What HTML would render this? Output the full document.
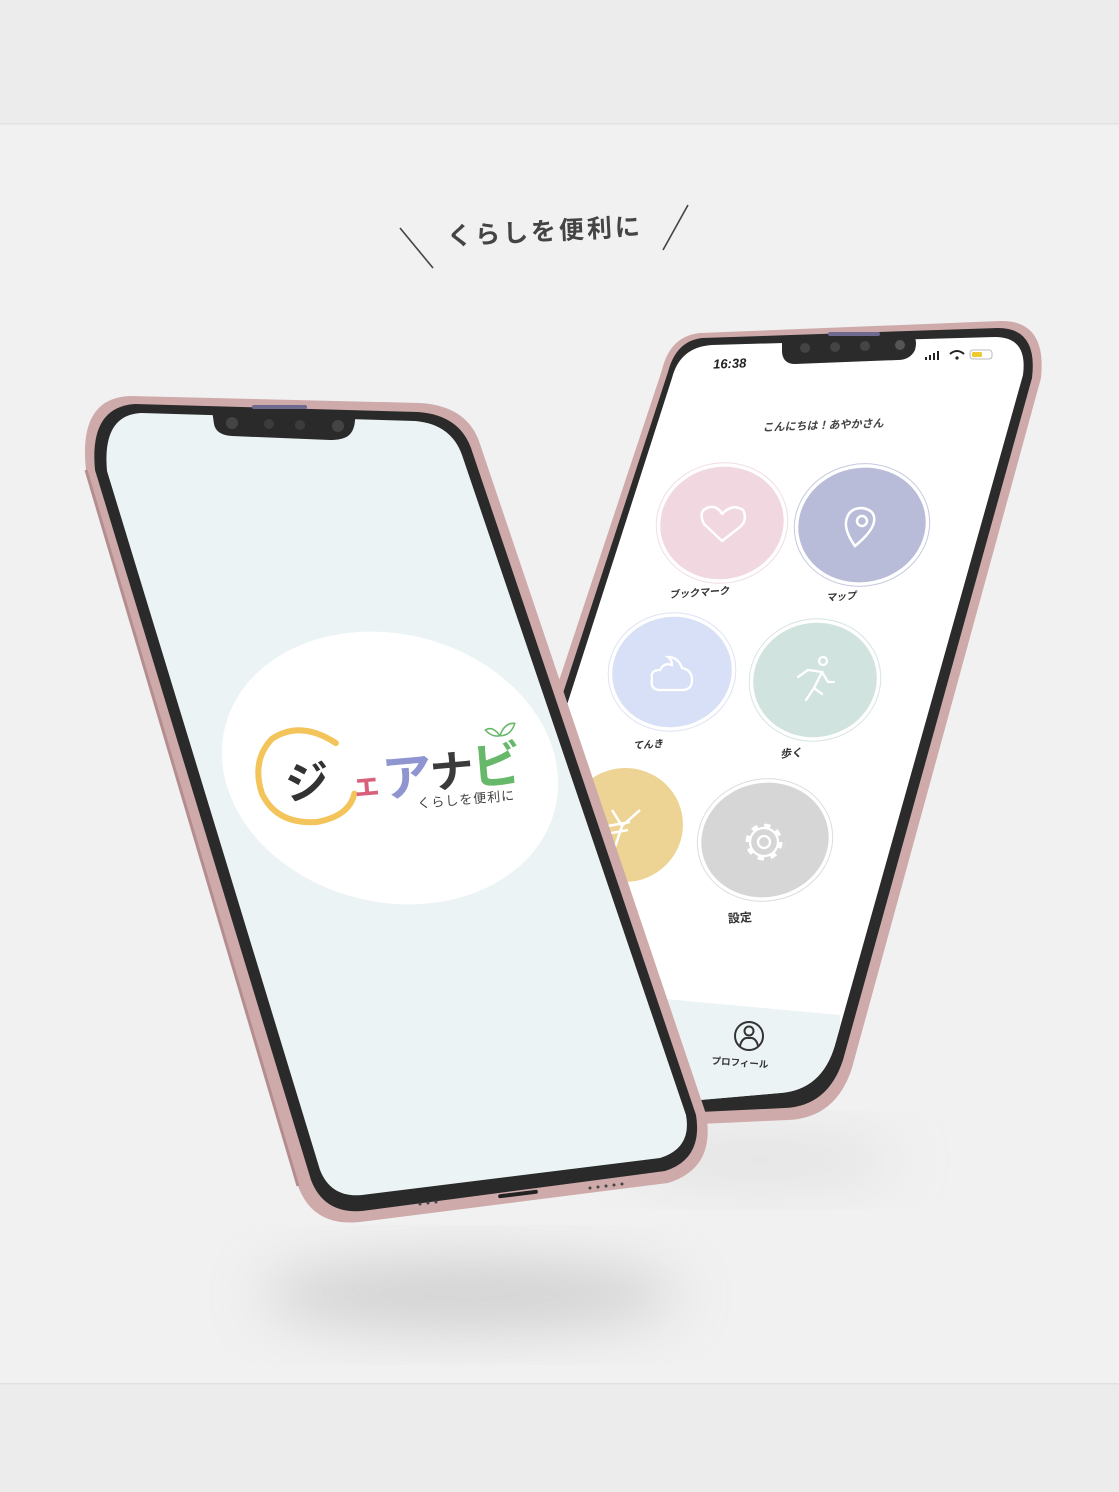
<!DOCTYPE html>
<html><head><meta charset="utf-8"><style>
html,body{margin:0;padding:0;background:#f1f1f1;}
svg{display:block}
text{font-family:"Liberation Sans","Noto Sans CJK JP",sans-serif;}
</style></head><body>
<svg width="1119" height="1492" viewBox="0 0 1119 1492" xmlns="http://www.w3.org/2000/svg">
<defs>
<filter id="bl" x="-50%" y="-50%" width="200%" height="200%"><feGaussianBlur stdDeviation="28"/></filter>
<clipPath id="rs"><path d="M712,345 L995,337 Q1028,337 1023,375 L835,1045 Q822,1090 780,1093 L700,1100 L440,1100 L672,378 Q680,347 712,345 Z"/></clipPath>
</defs>
<rect width="1119" height="1492" fill="#f1f1f1"/>
<rect width="1119" height="123" fill="#ececec"/>
<rect y="123" width="1119" height="1.5" fill="#e2e2e2"/>
<rect y="1383" width="1119" height="109" fill="#ececec"/>
<rect y="1383" width="1119" height="1.5" fill="#e0e0e0"/>

<line x1="400" y1="228" x2="433" y2="268" stroke="#444" stroke-width="1.6"/>
<line x1="688" y1="205" x2="663" y2="250" stroke="#444" stroke-width="1.6"/>
<text x="545" y="240" font-size="25" font-weight="bold" fill="#444" text-anchor="middle" letter-spacing="3" transform="rotate(-3 545 232)">くらしを便利に</text>

<ellipse cx="470" cy="1295" rx="210" ry="35" fill="#c9c9c9" filter="url(#bl)" opacity="0.8"/>
<ellipse cx="760" cy="1160" rx="140" ry="25" fill="#d3d3d3" filter="url(#bl)" opacity="0.5"/>

<!-- right phone -->
<path d="M700,333 L1000,321 Q1047,320 1041,378 L852,1068 Q836,1118 788,1120 L700,1124 L420,1100 L662,370 Q670,336 700,333 Z" fill="#cfaaaa"/>
<path d="M702,338 L998,328 Q1038,328 1032,378 L843,1060 Q828,1106 785,1108 L700,1112 L430,1100 L668,372 Q676,341 702,338 Z" fill="#2b2b2b"/>
<path d="M712,345 L995,337 Q1028,337 1023,375 L835,1045 Q822,1090 780,1093 L700,1100 L440,1100 L672,378 Q680,347 712,345 Z" fill="#fff"/>
<g clip-path="url(#rs)">
<path d="M600,993 L840,1015 L840,1110 L600,1110 Z" fill="#ebf3f5"/>
</g>
<path d="M782,340 L912,336 Q918,338 915,350 Q910,360 898,360 L795,364 Q783,364 782,352 Z" fill="#2b2b2b"/>
<rect x="828" y="332" width="52" height="4" rx="2" fill="#6f6a90"/>
<circle cx="805" cy="348" r="5" fill="#444"/><circle cx="835" cy="347" r="5" fill="#444"/><circle cx="865" cy="346" r="5" fill="#444"/><circle cx="900" cy="345" r="5" fill="#555"/>
<text x="713" y="368" font-size="13" font-weight="bold" font-style="italic" fill="#222" transform="rotate(-2 730 362)">16:38</text>
<g fill="#222"><rect x="925" y="357" width="2" height="3"/><rect x="929" y="355" width="2" height="5"/><rect x="933" y="353" width="2" height="7"/><rect x="937" y="351" width="2" height="9"/></g>
<path d="M950,354 Q957,348 964,354" stroke="#222" stroke-width="2" fill="none"/><circle cx="957" cy="358" r="1.6" fill="#222"/>
<rect x="970" y="350" width="22" height="9" rx="3" fill="#fff" stroke="#bbb"/><rect x="972" y="352" width="10" height="5" rx="1.5" fill="#f0c830"/>
<text x="823" y="429" font-size="11" font-weight="bold" font-style="italic" fill="#444" text-anchor="middle" transform="rotate(-2 823 425)">こんにちは！あやかさん</text>

<g transform="rotate(-12 722 523)"><ellipse cx="722" cy="523" rx="62" ry="56" fill="#f1d7df"/><ellipse cx="722" cy="523" rx="64" ry="58" fill="none" stroke="#fff" stroke-width="2"/><ellipse cx="722" cy="523" rx="66" ry="60" fill="none" stroke="#f0dde2" stroke-width="1"/></g>
<path d="M722,541 L704,524 Q697,510 710,507 Q718,506 722,514 Q732,503 743,510 Q748,520 740,527 Z" fill="none" stroke="#fff" stroke-width="2.5" stroke-linejoin="round"/>
<g transform="rotate(-12 862 525)"><ellipse cx="862" cy="525" rx="64" ry="57" fill="#b8bcd8"/><ellipse cx="862" cy="525" rx="66" ry="59" fill="none" stroke="#fff" stroke-width="2"/><ellipse cx="862" cy="525" rx="68" ry="61" fill="none" stroke="#c6c9e0" stroke-width="1"/></g>
<path d="M855,546 Q845,532 846,522 Q848,508 862,508 Q876,510 874,522 Q872,532 855,546 Z" fill="none" stroke="#fff" stroke-width="2.5"/>
<circle cx="862" cy="521" r="5" fill="none" stroke="#fff" stroke-width="2.5"/>
<text x="699" y="596" font-size="10" font-weight="bold" font-style="italic" fill="#333" text-anchor="middle" transform="rotate(-4 699 592)">ブックマーク</text>
<text x="841" y="600" font-size="10" font-weight="bold" font-style="italic" fill="#333" text-anchor="middle" transform="rotate(-4 841 596)">マップ</text>

<g transform="rotate(-12 672 672)"><ellipse cx="672" cy="672" rx="60" ry="55" fill="#d8e0f7"/><ellipse cx="672" cy="672" rx="62" ry="57" fill="none" stroke="#fff" stroke-width="2"/><ellipse cx="672" cy="672" rx="64" ry="59" fill="none" stroke="#dde3f5" stroke-width="1"/></g>
<path d="M658,690 Q650,688 652,679 Q650,670 660,670 Q664,662 672,665 Q672,660 668,657 Q678,657 682,668 Q692,670 692,680 Q692,690 682,690 Z" fill="none" stroke="#fff" stroke-width="2.3"/>
<g transform="rotate(-12 815 680)"><ellipse cx="815" cy="680" rx="62" ry="57" fill="#d1e3de"/><ellipse cx="815" cy="680" rx="64" ry="59" fill="none" stroke="#fff" stroke-width="2"/><ellipse cx="815" cy="680" rx="66" ry="61" fill="none" stroke="#d6e5e1" stroke-width="1"/></g>
<g fill="none" stroke="#fff" stroke-width="2.3" stroke-linecap="round"><circle cx="823" cy="661" r="4"/><path d="M798,677 L808,670 L822,672 L814,688 L806,700 M822,672 L828,682 L834,682 M814,688 L822,694"/></g>
<text x="648" y="748" font-size="10" font-weight="bold" font-style="italic" fill="#333" text-anchor="middle" transform="rotate(-4 648 744)">てんき</text>
<text x="791" y="757" font-size="11" font-weight="bold" font-style="italic" fill="#333" text-anchor="middle" transform="rotate(-4 791 753)">歩く</text>

<g clip-path="url(#rs)">
<g transform="rotate(-12 625 825)"><ellipse cx="625" cy="825" rx="58" ry="57" fill="#edd494"/><ellipse cx="625" cy="825" rx="60" ry="59" fill="none" stroke="#fff" stroke-width="2"/></g>
<path d="M612,810 L622,826 L640,810 M608,826 L630,822 M606,834 L628,830 M622,826 L614,850" stroke="#fff" stroke-width="2.5" fill="none"/>
</g>
<g transform="rotate(-12 765 840)"><ellipse cx="765" cy="840" rx="64" ry="57" fill="#d6d6d6"/><ellipse cx="765" cy="840" rx="66" ry="59" fill="none" stroke="#fff" stroke-width="2"/><ellipse cx="765" cy="840" rx="68" ry="61" fill="none" stroke="#ddd" stroke-width="1"/></g>
<circle cx="764" cy="842" r="17" fill="none" stroke="#fff" stroke-width="7" stroke-dasharray="6.5 6.85"/>
<circle cx="764" cy="842" r="14" fill="#d6d6d6" stroke="none"/>
<circle cx="764" cy="842" r="19.5" fill="none" stroke="#d6d6d6" stroke-width="2"/>
<path d="M764,826 m0,0" />
<circle cx="764" cy="842" r="14" fill="none" stroke="#fff" stroke-width="2.3"/>
<circle cx="764" cy="842" r="6" fill="none" stroke="#fff" stroke-width="2.3"/>
<text x="740" y="922" font-size="12" font-weight="bold" fill="#333" text-anchor="middle" transform="rotate(-4 740 918)">設定</text>
<circle cx="749" cy="1036" r="14" fill="none" stroke="#333" stroke-width="2"/>
<circle cx="749" cy="1031" r="4.5" fill="none" stroke="#333" stroke-width="2"/>
<path d="M740,1046 Q742,1037 749,1038 Q756,1037 758,1046" fill="none" stroke="#333" stroke-width="2"/>
<text x="740" y="1066" font-size="9.5" font-weight="bold" fill="#333" text-anchor="middle" transform="rotate(4 740 1062)">プロフィール</text>

<!-- left phone -->
<path d="M130,396 L420,403 Q468,406 480,444 L706,1114 Q716,1168 668,1183 L360,1222 Q313,1227 298,1186 L86,470 Q78,398 130,396 Z" fill="#cfaaaa"/>
<path d="M86,470 L298,1186" stroke="#b48e8e" stroke-width="3"/>
<path d="M135,404 L418,412 Q459,415 471,448 L696,1115 Q703,1159 665,1171 L362,1211 Q324,1214 311,1180 L95,470 Q89,407 135,404 Z" fill="#2a2a2a"/>
<path d="M141,413 L415,421 Q451,424 462,455 L686,1115 Q692,1148 660,1158 L362,1195 Q331,1198 320,1170 L107,471 Q102,415 141,413 Z" fill="#ecf3f5"/>
<path d="M212,410 L355,414 Q356,430 348,436 Q342,440 330,440 L232,436 Q216,435 214,424 Z" fill="#2a2a2a"/>
<rect x="252" y="405" width="55" height="4" rx="2" fill="#6f6a90"/>
<circle cx="232" cy="423" r="6" fill="#444"/><circle cx="269" cy="424" r="5" fill="#3c3c3c"/><circle cx="300" cy="425" r="5" fill="#3c3c3c"/><circle cx="338" cy="426" r="6" fill="#444"/>
<rect x="498" y="1192" width="40" height="4" rx="2" fill="#222" transform="rotate(-7 518 1194)"/>
<g fill="#444"><circle cx="420" cy="1204" r="1.5"/><circle cx="428" cy="1203" r="1.5"/><circle cx="436" cy="1202" r="1.5"/><circle cx="590" cy="1188" r="1.5"/><circle cx="598" cy="1187" r="1.5"/><circle cx="606" cy="1186" r="1.5"/><circle cx="614" cy="1185" r="1.5"/><circle cx="622" cy="1184" r="1.5"/></g>

<ellipse cx="390" cy="768" rx="170" ry="134" fill="#fff" transform="rotate(14 390 768)"/>
<g transform="rotate(-5 395 765)">
<path d="M338,738 Q305,712 275,728 Q252,748 260,782 Q272,814 312,815 Q345,812 352,790" fill="none" stroke="#f2c45a" stroke-width="6" stroke-linecap="round"/>
<text x="284" y="790" font-size="44" font-weight="bold" fill="#333">ジ</text>
<text x="350" y="792" font-size="30" font-weight="bold" fill="#d8607a">ェ</text>
<text x="381" y="796" font-size="50" font-weight="bold" fill="#8e95d0">ア</text>
<text x="429" y="792" font-size="44" font-weight="bold" fill="#3b3b3b">ナ</text>
<text x="471" y="792" font-size="50" font-weight="bold" fill="#67b86a">ビ</text>
<path d="M502,745 Q508,732 518,734 Q513,746 502,745 Z M502,745 Q496,734 488,738 Q494,746 502,745 Z" fill="none" stroke="#67b86a" stroke-width="1.5"/>
<text x="414" y="810" font-size="13" fill="#444" letter-spacing="1">くらしを便利に</text>
</g>
</svg>
</body></html>
